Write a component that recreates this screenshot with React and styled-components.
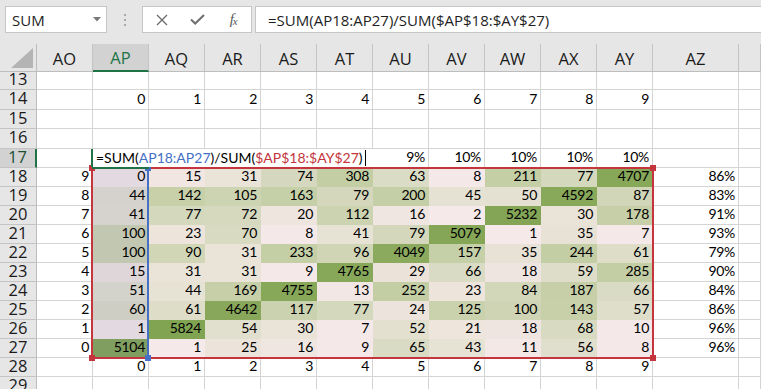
import styled, { createGlobalStyle, css } from 'styled-components'

const GlobalStyle = createGlobalStyle`
  html, body { margin: 0; padding: 0; background: #fff; }
  body { overflow: hidden; }
`

const GREEN = '#217346'
const RED = '#c4353d'
const BLUE = '#4670c6'

const Window = styled.div`
  width: 761px;
  height: 389px;
  overflow: hidden;
  background: #e6e6e6;
  display: flex;
  flex-direction: column;
`

const FormulaBar = styled.div`
  flex-shrink: 0;
  height: 44px;
  box-sizing: border-box;
  padding: 6px 0 0 5px;
  display: flex;
  align-items: flex-start;
`

const Box = styled.div`
  height: 27px;
  box-sizing: border-box;
  background: #fff;
  border: 1px solid #c6c6c6;
  display: flex;
  align-items: center;
  font: 15px 'Open Sans', sans-serif;
  color: #1f1f1f;
`

const NameBox = styled(Box)`
  width: 102px;
  justify-content: space-between;
  padding: 0 5px 0 6px;
`

const Grip = styled.div`
  width: 35px;
  height: 27px;
  display: flex;
  flex-direction: column;
  align-items: center;
  justify-content: center;
  gap: 3px;

  span {
    width: 2px;
    height: 2px;
    background: #a8a8a8;
  }
`

const Buttons = styled(Box)`
  width: 110px;
  padding-left: 1px;
`

const IconSlot = styled.div`
  width: 36px;
  height: 100%;
  display: flex;
  align-items: center;
  justify-content: center;
  color: #6e6e6e;
`

const Fx = styled.span`
  font: italic 15px 'Liberation Serif', serif;
  color: #5a5a5a;
  letter-spacing: -1px;

  sub {
    font-size: 11px;
    vertical-align: -1px;
  }
`

const FormulaInput = styled(Box)`
  flex: 1;
  margin-left: 3px;
  margin-right: -4px;
  padding-left: 12px;
  white-space: nowrap;
`

const Sheet = styled.div`
  display: grid;
  grid-template-columns: 37px repeat(11, 56px) 86px 1fr;
  grid-template-rows: 28px 18px repeat(4, 19.5px) repeat(12, 19px);
  background: #fff;
`

const placed = css`
  grid-row: ${p => p.$r};
  grid-column: ${p => p.$c};
`

const Corner = styled.div`
  ${placed}
  background: #e6e6e6;
  border-right: 1px solid #bdbdbd;
  border-bottom: 1px solid #bdbdbd;
  box-sizing: border-box;
  display: flex;
  align-items: flex-end;
  justify-content: flex-end;
  padding: 0 3px 3px 0;
`

const ColHead = styled.div`
  ${placed}
  box-sizing: border-box;
  background: ${p => (p.$active ? '#d2d2d2' : '#e6e6e6')};
  border-right: 1px solid #c4c4c4;
  border-bottom: ${p => (p.$active ? `2px solid ${GREEN}` : '1px solid #bdbdbd')};
  display: flex;
  align-items: center;
  justify-content: center;
  padding-top: 1px;
  font: 16.5px 'Open Sans', sans-serif;
  color: ${p => (p.$active ? GREEN : '#1a1a1a')};
`

const RowHead = styled.div`
  ${placed}
  box-sizing: border-box;
  background: ${p => (p.$active ? '#d2d2d2' : '#e6e6e6')};
  border-right: ${p => (p.$active ? `2px solid ${GREEN}` : '1px solid #bdbdbd')};
  border-bottom: 1px solid #c4c4c4;
  display: flex;
  align-items: flex-end;
  justify-content: center;
  padding-bottom: 2px;
  font: 16.5px/16.5px 'Open Sans', sans-serif;
  color: ${p => (p.$active ? '#1d4f32' : '#1a1a1a')};
  overflow: hidden;
`

const Cell = styled.div`
  ${placed}
  box-sizing: border-box;
  border-right: 1px solid #d4d4d4;
  border-bottom: 1px solid #d4d4d4;
  background: #fff;
  display: flex;
  align-items: flex-end;
  justify-content: flex-end;
  padding: 0 3px 3px 0;
  font: 14px/14px Lato, sans-serif;
  letter-spacing: -0.3px;
  color: #000;
  white-space: nowrap;
  overflow: hidden;
  ${p => p.$fill && css`
    background: ${p.$fill};
    border-color: transparent;
  `}
`

const Editor = styled.div`
  grid-column: 3 / 8;
  grid-row: 6;
  z-index: 3;
  margin-left: -2px;
  margin-bottom: 1px;
  background: #fff;
  border-left: 2px solid ${GREEN};
  display: flex;
  align-items: flex-end;
  padding: 0 0 2px 3px;
  font: 14px/14px Lato, sans-serif;
  color: #000;
  white-space: nowrap;
`

const Ref = styled.span`
  color: ${p => p.$color};
`

const Caret = styled.span`
  width: 1px;
  height: 16px;
  margin-left: 2px;
  margin-bottom: -1px;
  background: #000;
`

const ActiveLine = styled.div`
  grid-column: 3;
  grid-row: 6;
  z-index: 4;
  align-self: end;
  height: 2px;
  margin: 0 0 -1px -1px;
  background: ${GREEN};
`

const Range = styled.div`
  grid-column: ${p => p.$cols};
  grid-row: 7 / 17;
  position: relative;
  margin: -1px ${p => p.$mr} -1px -2px;
  border: 2px solid ${p => p.$color};
  pointer-events: none;
`

const Handle = styled.span`
  position: absolute;
  z-index: 2;
  width: 6px;
  height: 6px;
  background: ${p => p.$color};
  ${p => (p.$top ? 'top: -4px;' : 'bottom: -4px;')}
  ${p => (p.$left ? 'left: -4px;' : 'right: -4px;')}
`

const columns = ['AO', 'AP', 'AQ', 'AR', 'AS', 'AT', 'AU', 'AV', 'AW', 'AX', 'AY', 'AZ', '']

const heat = [
  [0, 15, 31, 74, 308, 63, 8, 211, 77, 4707],
  [44, 142, 105, 163, 79, 200, 45, 50, 4592, 87],
  [41, 77, 72, 20, 112, 16, 2, 5232, 30, 178],
  [100, 23, 70, 8, 41, 79, 5079, 1, 35, 7],
  [100, 90, 31, 233, 96, 4049, 157, 35, 244, 61],
  [15, 31, 31, 9, 4765, 29, 66, 18, 59, 285],
  [51, 44, 169, 4755, 13, 252, 23, 84, 187, 66],
  [60, 61, 4642, 117, 77, 24, 125, 100, 143, 57],
  [1, 5824, 54, 30, 7, 52, 21, 18, 68, 10],
  [5104, 1, 25, 16, 9, 65, 43, 11, 56, 8],
]

const shares = ['86%', '83%', '91%', '93%', '79%', '90%', '84%', '86%', '96%', '96%']
const topShares = ['9%', '10%', '10%', '10%', '10%']

const stops = [
  [0, [246, 233, 234]],
  [10, [245, 232, 232]],
  [15, [241, 230, 226]],
  [31, [234, 227, 216]],
  [50, [228, 225, 210]],
  [75, [213, 216, 189]],
  [140, [199, 208, 169]],
  [400, [194, 205, 162]],
  [4000, [140, 170, 94]],
  [6000, [128, 163, 82]],
]

const heatColor = (v, tinted) => {
  const x = Math.log(1 + v)
  let rgb = stops[stops.length - 1][1]
  for (let i = 1; i < stops.length; i++) {
    const [v0, c0] = stops[i - 1]
    const [v1, c1] = stops[i]
    if (v <= v1) {
      const a = Math.log(1 + v0)
      const b = Math.log(1 + v1)
      const t = (x - a) / (b - a)
      rgb = c0.map((c, k) => c + (c1[k] - c) * t)
      break
    }
  }
  if (tinted) rgb = rgb.map((c, k) => c * 0.88 + [90, 100, 160][k] * 0.12)
  return `rgb(${rgb.map(Math.round).join(',')})`
}

const cellFor = (row, col) => {
  if (row === 14 && col >= 1 && col <= 10) return { text: col - 1 }
  if (row === 28 && col >= 1 && col <= 10) return { text: col - 1 }
  if (row === 17 && col >= 6 && col <= 10) return { text: topShares[col - 6] }
  if (row >= 18 && row <= 27) {
    const i = row - 18
    if (col === 0) return { text: 27 - row }
    if (col === 11) return { text: shares[i] }
    if (col >= 1 && col <= 10) {
      const v = heat[i][col - 1]
      return { text: v, fill: heatColor(v, col === 1) }
    }
  }
  return { text: '' }
}

// sheet rows 13..29 sit on grid rows 2..18
const rows = Array.from({ length: 17 }, (_, i) => 13 + i)

const App = () => (
  <>
    <GlobalStyle />
    <Window>
      <FormulaBar>
        <NameBox>
          SUM
          <svg width="8" height="5" viewBox="0 0 8 5">
            <path d="M0 0h8L4 4.5z" fill="#7a7a7a" />
          </svg>
        </NameBox>
        <Grip>
          <span />
          <span />
          <span />
        </Grip>
        <Buttons>
          <IconSlot>
            <svg width="12" height="12" viewBox="0 0 12 12">
              <path d="M1 1l10 10M11 1L1 11" stroke="currentColor" strokeWidth="1.4" fill="none" />
            </svg>
          </IconSlot>
          <IconSlot>
            <svg width="15" height="11" viewBox="0 0 15 11">
              <path d="M1 5.5l4.2 4L14 1" stroke="currentColor" strokeWidth="2" fill="none" />
            </svg>
          </IconSlot>
          <IconSlot>
            <Fx>f<sub>x</sub></Fx>
          </IconSlot>
        </Buttons>
        <FormulaInput>=SUM(AP18:AP27)/SUM($AP$18:$AY$27)</FormulaInput>
      </FormulaBar>

      <Sheet>
        <Corner $r={1} $c={1}>
          <svg width="22" height="20" viewBox="0 0 22 20">
            <path d="M22 0v20H0z" fill="#b4b4b4" />
          </svg>
        </Corner>
        {columns.map((c, i) => (
          <ColHead key={c || 'end'} $r={1} $c={i + 2} $active={i === 1}>{c}</ColHead>
        ))}

        {rows.map(r => [
          <RowHead key={`h${r}`} $r={r - 11} $c={1} $active={r === 17}>{r}</RowHead>,
          ...columns.map((c, i) => {
            const { text, fill } = cellFor(r, i)
            return (
              <Cell key={`${r}-${i}`} $r={r - 11} $c={i + 2} $fill={fill}>
                {text}
              </Cell>
            )
          }),
        ])}

        <Range $cols="3 / 4" $mr="0px" $color={BLUE}>
          <Handle $color={BLUE} $top />
          <Handle $color={BLUE} />
        </Range>
        <Range $cols="3 / 13" $mr="-1px" $color={RED}>
          <Handle $color={RED} $top $left />
          <Handle $color={RED} $top />
          <Handle $color={RED} $left />
          <Handle $color={RED} />
        </Range>

        <Editor>
          =SUM(<Ref $color={BLUE}>AP18:AP27</Ref>)/SUM(<Ref $color={RED}>$AP$18:$AY$27</Ref>)
          <Caret />
        </Editor>
        <ActiveLine />
      </Sheet>
    </Window>
  </>
)

export default App
